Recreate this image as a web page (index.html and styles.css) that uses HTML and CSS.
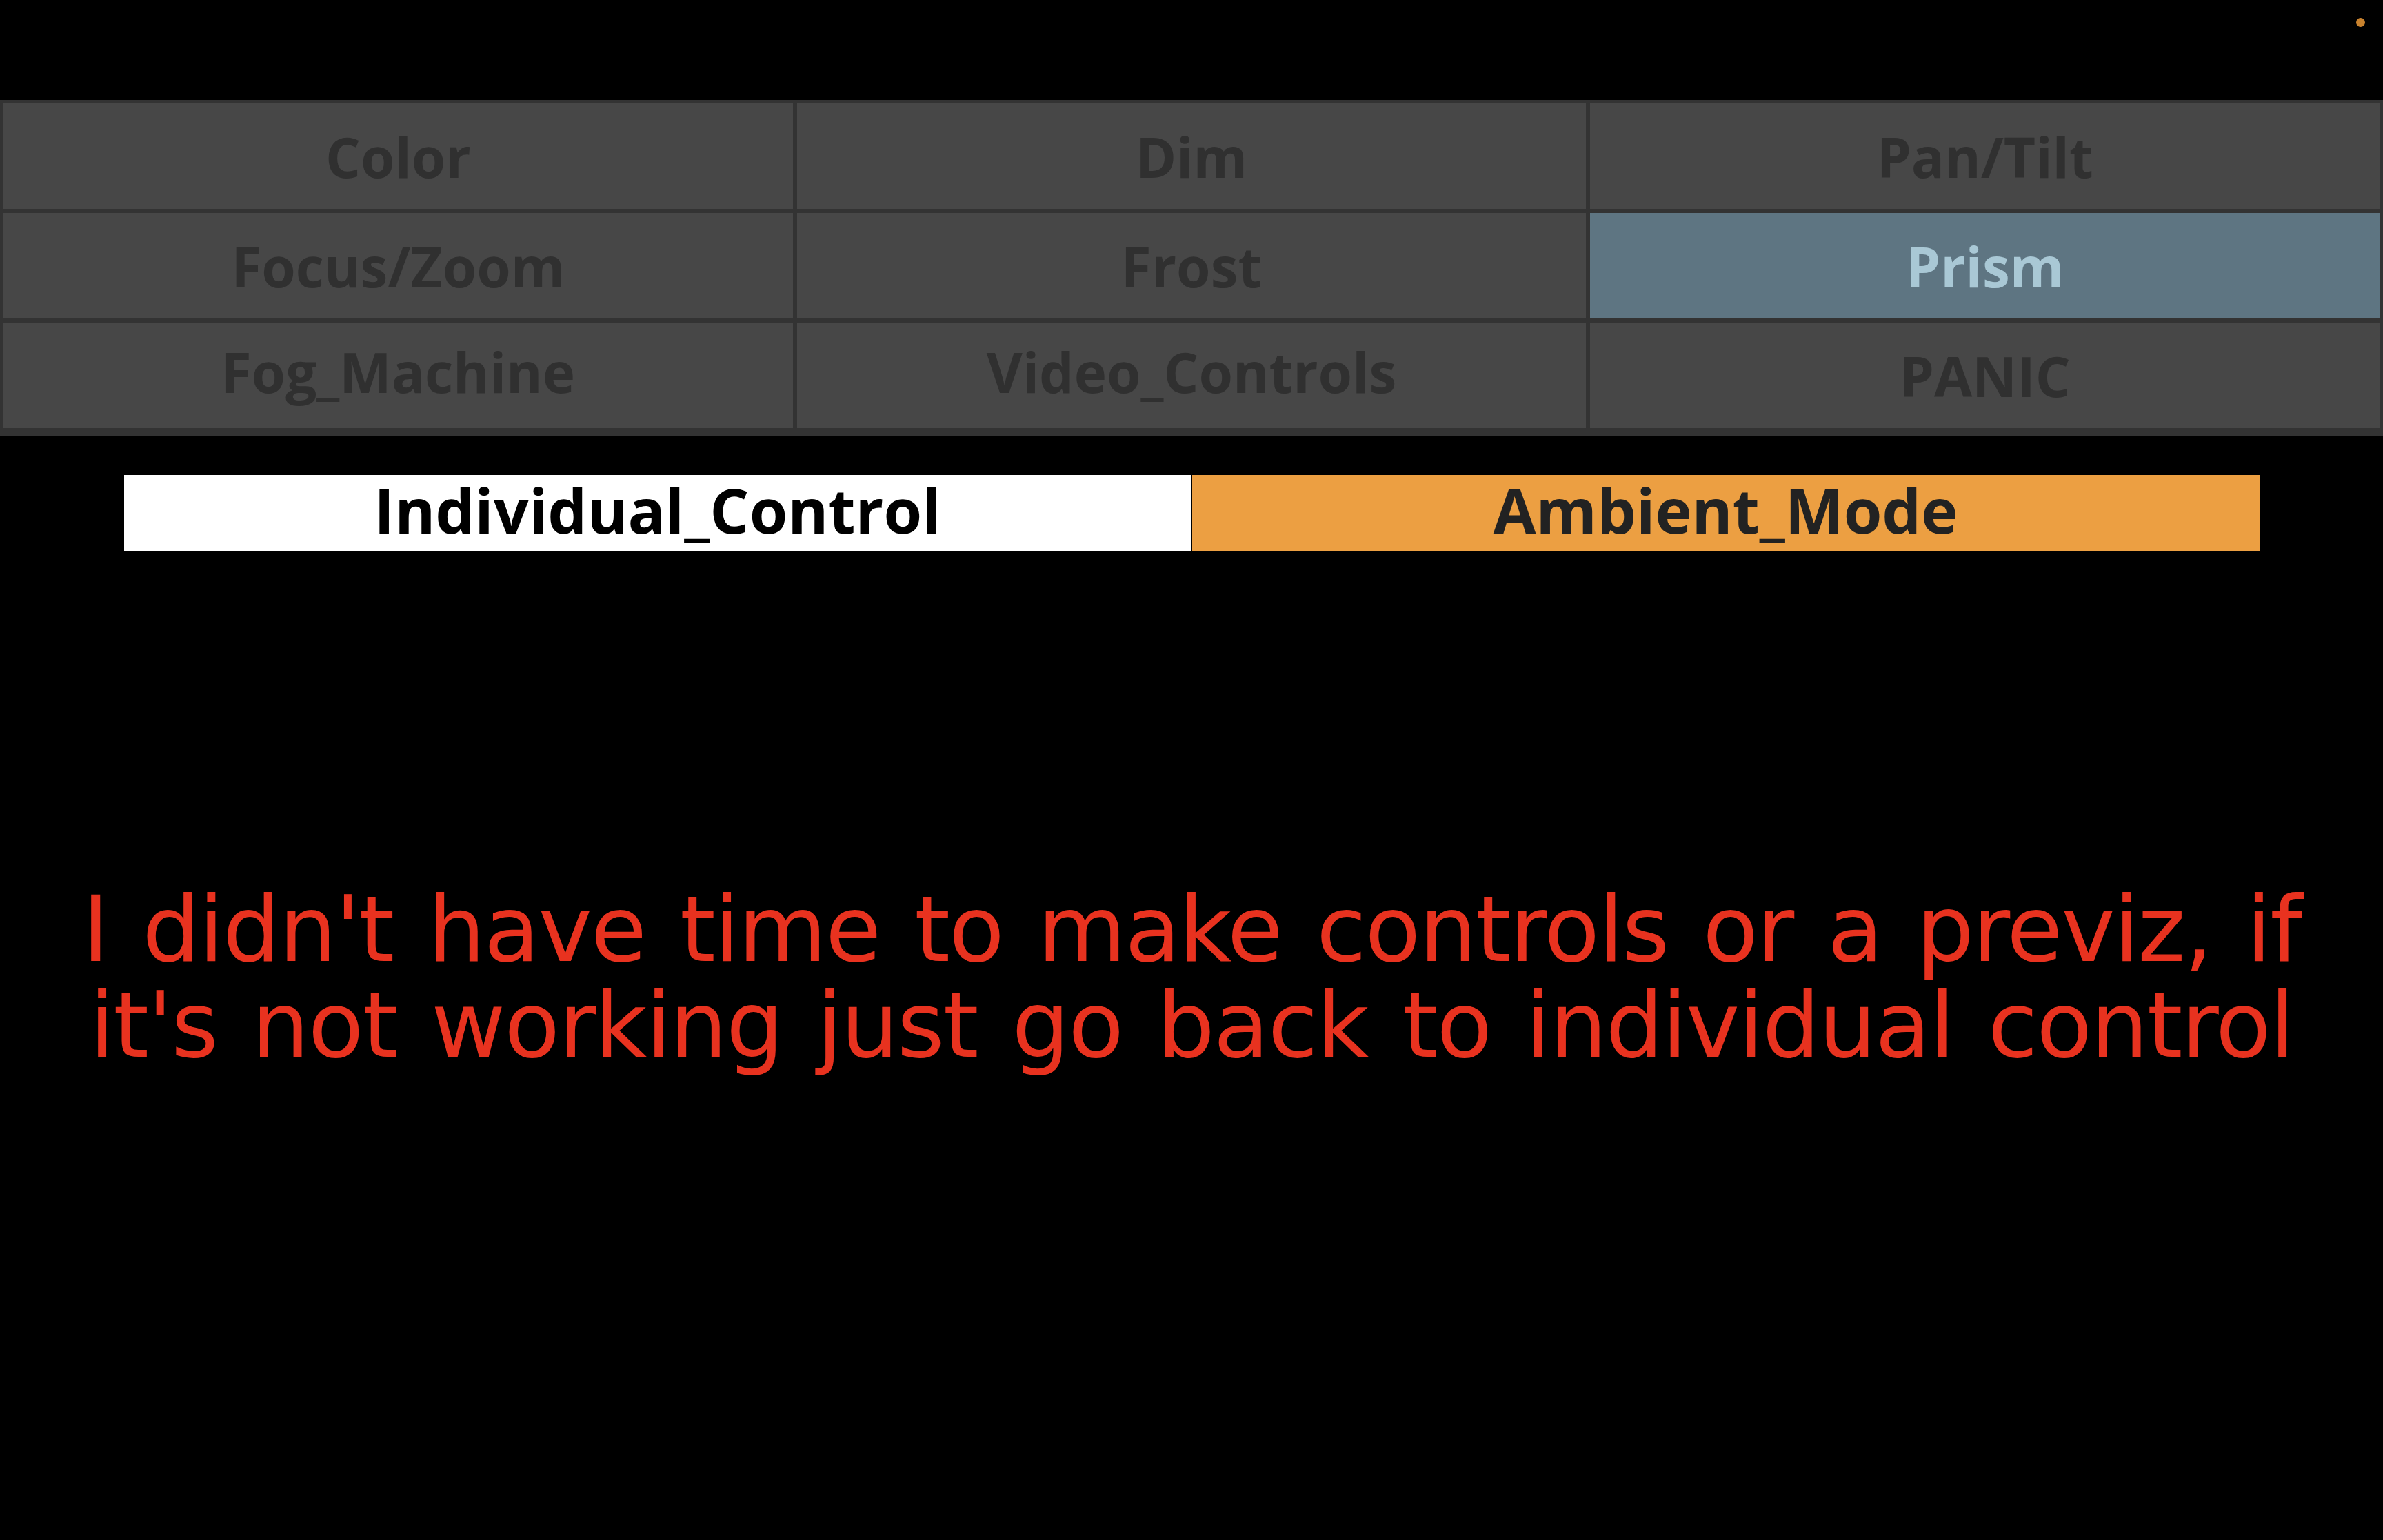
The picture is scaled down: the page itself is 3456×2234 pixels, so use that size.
FILE: index.html
```html
<!DOCTYPE html>
<html lang="en">
<head>
<meta charset="utf-8">
<title>Control Surface</title>
<link rel="stylesheet" href="styles.css">
</head>
<body>
<div class="screen">
  <span class="status-dot"></span>
  <div class="tabs">
    <div class="tab">Color</div>
    <div class="tab">Dim</div>
    <div class="tab">Pan/Tilt</div>
    <div class="tab">Focus/Zoom</div>
    <div class="tab">Frost</div>
    <div class="tab tab-active">Prism</div>
    <div class="tab tab-desc">Fog_Machine</div>
    <div class="tab tab-desc">Video_Controls</div>
    <div class="tab">PANIC</div>
  </div>
  <div class="modes">
    <div class="mode mode-individual">Individual_Control</div>
    <div class="mode mode-ambient">Ambient_Mode</div>
  </div>
  <p class="notice">I didn't have time to make controls or a previz, if<br>it's not working just go back to individual control</p>
</div>
</body>
</html>
```
FILE: styles.css
```css
html, body {
  margin: 0;
  padding: 0;
  background: #000;
}
.screen {
  position: relative;
  width: 3456px;
  height: 2234px;
  overflow: hidden;
  padding-top: 145px;
  box-sizing: border-box;
}
.status-dot {
  position: absolute;
  top: 26px;
  right: 26px;
  width: 13px;
  height: 13px;
  border-radius: 50%;
  background: #c8822e;
}
.tabs {
  display: grid;
  grid-template-columns: repeat(3, 1fr);
  grid-auto-rows: 153px;
  gap: 6px;
  padding: 5px 5px 11px 5px;
  background: #333333;
}
.tab {
  display: flex;
  align-items: center;
  justify-content: center;
  background: #474747;
  color: #303030;
  font-family: "Open Sans", "Liberation Sans", sans-serif;
  font-weight: 700;
  font-size: 80px;
  line-height: 1;
}
.tab-desc {
  padding-bottom: 12px;
  box-sizing: border-box;
}
.tab-active {
  background: #5e7582;
  color: #a9c8d5;
}
.modes {
  display: flex;
  gap: 1px;
  width: 3097px;
  height: 111px;
  margin: 57px auto 0;
}
.mode {
  flex: 1;
  display: flex;
  align-items: center;
  justify-content: center;
  padding-bottom: 11px;
  box-sizing: border-box;
  font-family: "Open Sans", "Liberation Sans", sans-serif;
  font-weight: 700;
  font-size: 90px;
  line-height: 1;
}
.mode-individual {
  background: #ffffff;
  color: #000000;
}
.mode-ambient {
  background: #ec9f42;
  color: #222222;
}
.notice {
  margin: 479px 0 0;
  text-align: center;
  color: #e8321f;
  font-family: "DejaVu Sans", "Verdana", sans-serif;
  font-size: 132px;
  line-height: 139px;
  letter-spacing: -2px;
  word-spacing: 10px;
}
```
